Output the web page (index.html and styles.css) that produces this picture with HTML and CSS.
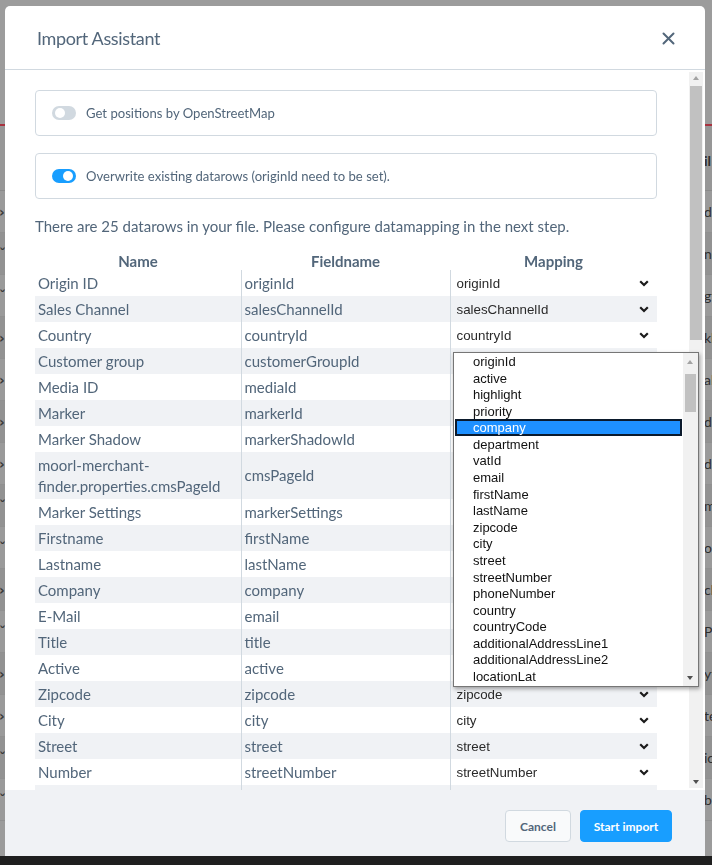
FILE: index.html
```html
<!DOCTYPE html>
<html>
<head>
<meta charset="utf-8">
<title>Import Assistant</title>
<link rel="stylesheet" href="styles.css">
</head>
<body>
<div class="page">
  <div class="page-top"></div>
  <div class="page-line"></div>
  <div class="page-head"><span class="pg-left"></span><span class="pg-right bold">il</span></div>
  <div class="page-row"><span class="pg-left">&#8250;</span><span class="pg-right">d</span></div>
  <div class="page-row alt"><span class="pg-left">&#711;</span><span class="pg-right">ne</span></div>
  <div class="page-row"><span class="pg-left">&#711;</span><span class="pg-right">gt</span></div>
  <div class="page-row alt"><span class="pg-left">&#8250;</span><span class="pg-right">kl</span></div>
  <div class="page-row"><span class="pg-left">&#8250;</span><span class="pg-right">al</span></div>
  <div class="page-row alt"><span class="pg-left">&#8250;</span><span class="pg-right">d</span></div>
  <div class="page-row"><span class="pg-left">&#8250;</span><span class="pg-right">d</span></div>
  <div class="page-row alt"><span class="pg-left">&#711;</span><span class="pg-right">m</span></div>
  <div class="page-row"><span class="pg-left">&#711;</span><span class="pg-right">or</span></div>
  <div class="page-row alt"><span class="pg-left">&#8250;</span><span class="pg-right">ck</span></div>
  <div class="page-row"><span class="pg-left">&#711;</span><span class="pg-right">P</span></div>
  <div class="page-row alt"><span class="pg-left">&#8250;</span><span class="pg-right">yt</span></div>
  <div class="page-row"><span class="pg-left">&#8250;</span><span class="pg-right">te</span></div>
  <div class="page-row alt"><span class="pg-left">&#711;</span><span class="pg-right">ic</span></div>
  <div class="page-row"><span class="pg-left">&#711;</span><span class="pg-right">b</span></div>
</div>
<div class="taskbar"></div>

<div class="modal">
  <header class="modal-header">
    <h2 class="modal-title">Import Assistant</h2>
    <svg class="close" width="13" height="13" viewBox="0 0 13 13"><path d="M1.5 1.5 L11.5 11.5 M11.5 1.5 L1.5 11.5" stroke="#52667a" stroke-width="2" stroke-linecap="round" fill="none"/></svg>
  </header>
  <div class="modal-body">
    <div class="content">
      <div class="card"><span class="toggle"></span><span class="card-label">Get positions by OpenStreetMap</span></div>
      <div class="card"><span class="toggle on"></span><span class="card-label">Overwrite existing datarows (originId need to be set).</span></div>
      <p class="info">There are 25 datarows in your file. Please configure datamapping in the next step.</p>
      <table class="map-table">
        <thead>
          <tr><th>Name</th><th>Fieldname</th><th>Mapping</th></tr>
        </thead>
        <tbody>
          <tr><td>Origin ID</td><td>originId</td><td><div class="sel"><span>originId</span><svg width="10" height="7" viewBox="0 0 10 7"><path d="M1.2 1.2 L5 5 L8.8 1.2" stroke="#1b1b1b" stroke-width="2.2" fill="none"/></svg></div></td></tr>
          <tr><td>Sales Channel</td><td>salesChannelId</td><td><div class="sel"><span>salesChannelId</span><svg width="10" height="7" viewBox="0 0 10 7"><path d="M1.2 1.2 L5 5 L8.8 1.2" stroke="#1b1b1b" stroke-width="2.2" fill="none"/></svg></div></td></tr>
          <tr><td>Country</td><td>countryId</td><td><div class="sel"><span>countryId</span><svg width="10" height="7" viewBox="0 0 10 7"><path d="M1.2 1.2 L5 5 L8.8 1.2" stroke="#1b1b1b" stroke-width="2.2" fill="none"/></svg></div></td></tr>
          <tr><td>Customer group</td><td>customerGroupId</td><td><div class="sel"><span>customerGroupId</span><svg width="10" height="7" viewBox="0 0 10 7"><path d="M1.2 1.2 L5 5 L8.8 1.2" stroke="#1b1b1b" stroke-width="2.2" fill="none"/></svg></div></td></tr>
          <tr><td>Media ID</td><td>mediaId</td><td><div class="sel"><span>mediaId</span><svg width="10" height="7" viewBox="0 0 10 7"><path d="M1.2 1.2 L5 5 L8.8 1.2" stroke="#1b1b1b" stroke-width="2.2" fill="none"/></svg></div></td></tr>
          <tr><td>Marker</td><td>markerId</td><td><div class="sel"><span>markerId</span><svg width="10" height="7" viewBox="0 0 10 7"><path d="M1.2 1.2 L5 5 L8.8 1.2" stroke="#1b1b1b" stroke-width="2.2" fill="none"/></svg></div></td></tr>
          <tr><td>Marker Shadow</td><td>markerShadowId</td><td><div class="sel"><span>markerShadowId</span><svg width="10" height="7" viewBox="0 0 10 7"><path d="M1.2 1.2 L5 5 L8.8 1.2" stroke="#1b1b1b" stroke-width="2.2" fill="none"/></svg></div></td></tr>
          <tr><td>moorl-merchant-finder.properties.cmsPageId</td><td>cmsPageId</td><td><div class="sel"><span>cmsPageId</span><svg width="10" height="7" viewBox="0 0 10 7"><path d="M1.2 1.2 L5 5 L8.8 1.2" stroke="#1b1b1b" stroke-width="2.2" fill="none"/></svg></div></td></tr>
          <tr><td>Marker Settings</td><td>markerSettings</td><td><div class="sel"><span>markerSettings</span><svg width="10" height="7" viewBox="0 0 10 7"><path d="M1.2 1.2 L5 5 L8.8 1.2" stroke="#1b1b1b" stroke-width="2.2" fill="none"/></svg></div></td></tr>
          <tr><td>Firstname</td><td>firstName</td><td><div class="sel"><span>firstName</span><svg width="10" height="7" viewBox="0 0 10 7"><path d="M1.2 1.2 L5 5 L8.8 1.2" stroke="#1b1b1b" stroke-width="2.2" fill="none"/></svg></div></td></tr>
          <tr><td>Lastname</td><td>lastName</td><td><div class="sel"><span>lastName</span><svg width="10" height="7" viewBox="0 0 10 7"><path d="M1.2 1.2 L5 5 L8.8 1.2" stroke="#1b1b1b" stroke-width="2.2" fill="none"/></svg></div></td></tr>
          <tr><td>Company</td><td>company</td><td><div class="sel"><span>company</span><svg width="10" height="7" viewBox="0 0 10 7"><path d="M1.2 1.2 L5 5 L8.8 1.2" stroke="#1b1b1b" stroke-width="2.2" fill="none"/></svg></div></td></tr>
          <tr><td>E-Mail</td><td>email</td><td><div class="sel"><span>email</span><svg width="10" height="7" viewBox="0 0 10 7"><path d="M1.2 1.2 L5 5 L8.8 1.2" stroke="#1b1b1b" stroke-width="2.2" fill="none"/></svg></div></td></tr>
          <tr><td>Title</td><td>title</td><td><div class="sel"><span>title</span><svg width="10" height="7" viewBox="0 0 10 7"><path d="M1.2 1.2 L5 5 L8.8 1.2" stroke="#1b1b1b" stroke-width="2.2" fill="none"/></svg></div></td></tr>
          <tr><td>Active</td><td>active</td><td><div class="sel"><span>active</span><svg width="10" height="7" viewBox="0 0 10 7"><path d="M1.2 1.2 L5 5 L8.8 1.2" stroke="#1b1b1b" stroke-width="2.2" fill="none"/></svg></div></td></tr>
          <tr><td>Zipcode</td><td>zipcode</td><td><div class="sel"><span>zipcode</span><svg width="10" height="7" viewBox="0 0 10 7"><path d="M1.2 1.2 L5 5 L8.8 1.2" stroke="#1b1b1b" stroke-width="2.2" fill="none"/></svg></div></td></tr>
          <tr><td>City</td><td>city</td><td><div class="sel"><span>city</span><svg width="10" height="7" viewBox="0 0 10 7"><path d="M1.2 1.2 L5 5 L8.8 1.2" stroke="#1b1b1b" stroke-width="2.2" fill="none"/></svg></div></td></tr>
          <tr><td>Street</td><td>street</td><td><div class="sel"><span>street</span><svg width="10" height="7" viewBox="0 0 10 7"><path d="M1.2 1.2 L5 5 L8.8 1.2" stroke="#1b1b1b" stroke-width="2.2" fill="none"/></svg></div></td></tr>
          <tr><td>Number</td><td>streetNumber</td><td><div class="sel"><span>streetNumber</span><svg width="10" height="7" viewBox="0 0 10 7"><path d="M1.2 1.2 L5 5 L8.8 1.2" stroke="#1b1b1b" stroke-width="2.2" fill="none"/></svg></div></td></tr>
          <tr><td>Phone</td><td>phoneNumber</td><td><div class="sel"><span>phoneNumber</span><svg width="10" height="7" viewBox="0 0 10 7"><path d="M1.2 1.2 L5 5 L8.8 1.2" stroke="#1b1b1b" stroke-width="2.2" fill="none"/></svg></div></td></tr>
        </tbody>
      </table>
    </div>
    <div class="vscroll">
      <div class="arrow up"></div>
      <div class="track"><div class="thumb"></div></div>
      <div class="arrow down"></div>
    </div>
  </div>
  <footer class="modal-footer">
    <button class="btn btn-cancel">Cancel</button>
    <button class="btn btn-primary">Start import</button>
  </footer>
</div>

<div class="dropdown">
  <ul class="options">
    <li>originId</li>
    <li>active</li>
    <li>highlight</li>
    <li>priority</li>
    <li class="selected">company</li>
    <li>department</li>
    <li>vatId</li>
    <li>email</li>
    <li>firstName</li>
    <li>lastName</li>
    <li>zipcode</li>
    <li>city</li>
    <li>street</li>
    <li>streetNumber</li>
    <li>phoneNumber</li>
    <li>country</li>
    <li>countryCode</li>
    <li>additionalAddressLine1</li>
    <li>additionalAddressLine2</li>
    <li>locationLat</li>
  </ul>
  <div class="dscroll">
    <div class="arrow up small"></div>
    <div class="dtrack"><div class="dthumb"></div></div>
    <div class="arrow down small"></div>
  </div>
</div>
</body>
</html>
```
FILE: styles.css
```css
* { box-sizing: border-box; }
html, body {
  margin: 0;
  padding: 0;
  width: 712px;
  height: 865px;
  overflow: hidden;
}
body {
  font-family: Lato, "Liberation Sans", sans-serif;
  background: #9a9a9a;
  color: #52667a;
}

/* ---------- backdrop page (dimmed) ---------- */
.page {
  height: 856px;
  display: flex;
  flex-direction: column;
  background: #9b9b9b;
  overflow: hidden;
}
.page-top { height: 124px; background: #9c9c9c; }
.page-line { height: 2px; background: #a8323f; }
.page-head {
  height: 65px;
  display: flex;
  justify-content: space-between;
  align-items: center;
  padding-top: 4px;
  background: #979797;
  border-bottom: 1px solid #8a8a8a;
}
.page-row {
  height: 42px;
  display: flex;
  justify-content: space-between;
  align-items: center;
  background: #9a9a9a;
  border-bottom: 1px solid #909090;
}
.page-row.alt { background: #929292; }
.pg-left {
  width: 6px;
  font-family: "DejaVu Sans", sans-serif;
  font-size: 14px;
  font-weight: bold;
  color: #3a3a3a;
  line-height: 1;
  overflow: hidden;
  margin-left: -1px;
}
.pg-right {
  width: 8px;
  overflow: hidden;
  white-space: nowrap;
  font-size: 14px;
  color: #2e2e2e;
}
.pg-right.bold { font-weight: bold; }
.taskbar { height: 9px; background: #1f1f1f; }

/* ---------- modal ---------- */
.modal {
  position: fixed;
  left: 5px;
  top: 6px;
  width: 700px;
  height: 850px;
  background: #fff;
  border-radius: 5px 5px 0 0;
  display: flex;
  flex-direction: column;
  overflow: hidden;
}
.modal-header {
  height: 64px;
  flex: none;
  border-bottom: 1px solid #d1d9e0;
  display: flex;
  align-items: center;
  justify-content: space-between;
  padding: 0 30px 0 32px;
}
.modal-title {
  margin: 0;
  font-size: 18px;
  font-weight: 400;
  color: #52667a;
  letter-spacing: -0.35px;
}
.close { display: block; margin-top: 1px; }

.modal-body {
  height: 720px;
  flex: none;
  display: flex;
}
.content {
  flex: 1;
  padding: 20px 32px 0 30px;
  overflow: hidden;
}
.card {
  height: 46px;
  border: 1px solid #d1d9e0;
  border-radius: 4px;
  display: flex;
  align-items: center;
  gap: 10px;
  padding: 0 16px;
  margin-bottom: 17px;
}
.card-label { font-size: 13.1px; color: #52667a; }
.toggle {
  width: 24px;
  height: 14px;
  border-radius: 7px;
  background: #d1d9e0;
  position: relative;
  flex: none;
}
.toggle::after {
  content: "";
  position: absolute;
  top: 2px;
  left: 3px;
  width: 10px;
  height: 10px;
  border-radius: 50%;
  background: #fff;
}
.toggle.on { background: #189eff; }
.toggle.on::after { left: 11px; }

.info {
  margin: -1px 0 0;
  font-size: 15px;
  line-height: 22px;
  color: #52667a;
}

.map-table {
  margin-top: 12px;
  width: 622px;
  border-collapse: collapse;
  table-layout: fixed;
  font-size: 15px;
  color: #52667a;
}
.map-table th:nth-child(1), .map-table td:nth-child(1) { width: 206px; }
.map-table th:nth-child(2), .map-table td:nth-child(2) { width: 209px; }
.map-table th {
  font-weight: 700;
  line-height: 17px;
  padding: 4px 0 0;
  text-align: center;
  color: #52667a;
}
.map-table td {
  line-height: 21px;
  padding: 2.5px 3px;
  vertical-align: middle;
}
.map-table td + td { border-left: 1px solid #d1d9e0; }
.map-table td:nth-child(3) { padding: 0 8px 0 6px; }
.map-table tbody tr:nth-child(even) { background: #f0f2f5; }

.sel {
  display: flex;
  align-items: center;
  justify-content: space-between;
  font-family: "Liberation Sans", Arial, sans-serif;
  font-size: 13.33px;
  color: #2a2a2a;
  height: 26px;
}
.sel svg { display: block; margin-right: 0; }

/* main scrollbar */
.vscroll {
  width: 14px;
  margin: 2px 2px 2px 0;
  display: flex;
  flex-direction: column;
  background: #f1f1f1;
}
.track { flex: 1; padding: 2px 1px; }
.thumb { height: 254px; margin-top: 0; background: #c1c1c1; }
.arrow { height: 12px; position: relative; flex: none; }
.arrow::after {
  content: "";
  position: absolute;
  left: 50%;
  top: 50%;
  margin-left: -3.5px;
  border-left: 3.5px solid transparent;
  border-right: 3.5px solid transparent;
}
.arrow.up::after { margin-top: -2px; border-bottom: 4px solid #a3a3a3; }
.arrow.down::after { margin-top: -2px; border-top: 4px solid #505050; }

/* ---------- footer ---------- */
.modal-footer {
  flex: 1;
  background: #f0f2f5;
  display: flex;
  justify-content: flex-end;
  align-items: flex-start;
  gap: 9px;
  padding: 20px 33px 0 0;
}
.btn {
  height: 32px;
  border-radius: 4px;
  font-family: Lato, "Liberation Sans", sans-serif;
  font-size: 12px;
  font-weight: 700;
  padding: 0;
  cursor: pointer;
}
.btn-cancel {
  width: 66px;
  background: #f9fafb;
  border: 1px solid #d1d9e0;
  color: #52667a;
}
.btn-primary {
  width: 92px;
  background: #189eff;
  border: 1px solid #189eff;
  color: #fff;
}

/* ---------- open select dropdown ---------- */
.dropdown {
  position: absolute;
  left: 453px;
  top: 352px;
  width: 246px;
  height: 335px;
  background: #fff;
  border: 1px solid #767676;
  box-shadow: 1px 2px 4px rgba(0,0,0,0.35);
  display: flex;
}
.options {
  list-style: none;
  margin: 0;
  padding: 0;
  flex: 1;
  font-family: "Liberation Sans", Arial, sans-serif;
  font-size: 13px;
  color: #111;
}
.options li {
  height: 16.58px;
  line-height: 17.5px;
  padding-left: 19px;
  white-space: nowrap;
}
.options li.selected {
  margin: 0 1px;
  padding-left: 16px;
  background: #1e90ff;
  border: 2px solid #0b1a2c;
  line-height: 13.5px;
  color: #fff;
}
.dscroll {
  width: 15px;
  display: flex;
  flex-direction: column;
  background: #f1f1f1;
}
.arrow.small { height: 17px; }
.dtrack { flex: 1; padding: 4px 2px 0; }
.dthumb { height: 38px; background: #c1c1c1; }
```
